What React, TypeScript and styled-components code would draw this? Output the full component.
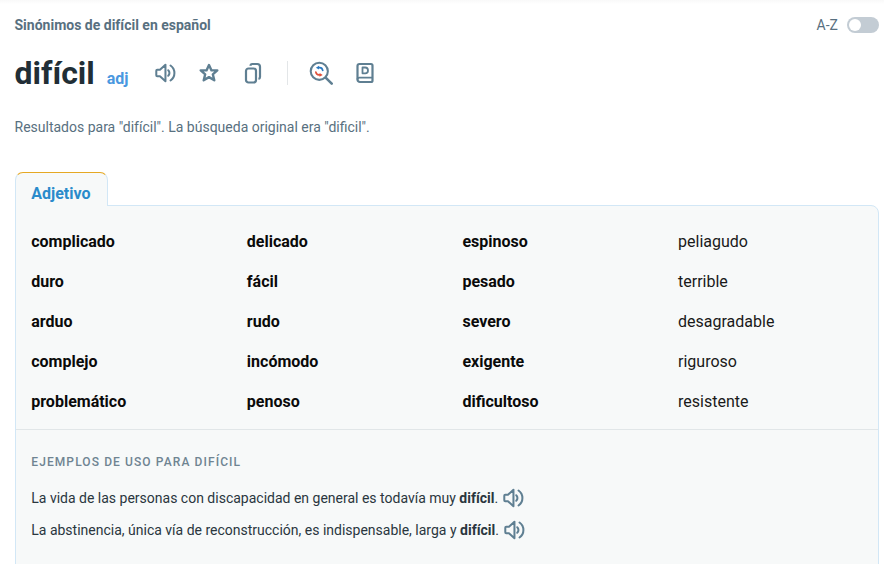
import styled, { createGlobalStyle } from 'styled-components';

const GlobalStyle = createGlobalStyle`
  html, body {
    margin: 0;
    height: 564px;
    overflow: hidden;
    background: #fff;
    font-family: Roboto, "Liberation Sans", sans-serif;
  }
`;

const Page = styled.div`
  height: 564px;
  overflow: hidden;
  padding: 0 5px 0 15px;
  background: linear-gradient(#f9f9f9, #fff 4px);
`;

const TopRow = styled.div`
  display: flex;
  justify-content: space-between;
  align-items: center;
  height: 20px;
  padding-top: 15px;
`;

const Heading = styled.h2`
  margin: 0 0 0 -0.5px;
  font-size: 14px;
  line-height: 20px;
  font-weight: 700;
  color: #587080;
`;

const SortToggle = styled.div`
  display: flex;
  align-items: center;
  gap: 9px;
  font-size: 14px;
  color: #587080;
`;

const Track = styled.div`
  width: 32px;
  height: 16px;
  border-radius: 8px;
  background: #c3ccd4;
  position: relative;

  &::after {
    content: '';
    position: absolute;
    left: 2px;
    top: 2px;
    width: 12px;
    height: 12px;
    border-radius: 50%;
    background: #fff;
  }
`;

const TitleRow = styled.div`
  display: flex;
  align-items: center;
  height: 40px;
  margin: 18px 0 0 -0.5px;
`;

const Word = styled.h1`
  margin: 0;
  font-size: 32px;
  line-height: 40px;
  font-weight: 700;
  color: #212e36;
`;

const Pos = styled.span`
  margin: 11px 0 0 12px;
  font-size: 16px;
  font-weight: 700;
  color: #4a98e0;
`;

const IconButton = styled.span<{ $left: number }>`
  display: flex;
  width: 24px;
  height: 24px;
  align-items: center;
  justify-content: center;
  margin-left: ${p => p.$left}px;
`;

const Divider = styled.span`
  width: 1px;
  height: 24px;
  background: #e3e6e8;
  margin-left: 22px;
`;

const Note = styled.p`
  margin: 24px 0 0 -0.5px;
  font-size: 14px;
  line-height: 20px;
  color: #587080;
`;

const Tab = styled.div`
  box-sizing: border-box;
  width: 93px;
  height: 34px;
  margin: 35px 0 -1px;
  position: relative;
  z-index: 1;
  padding: 12px 0 0 15.250px;
  border: 1px solid #d2e7f6;
  border-top: 1px solid #e5a823;
  border-bottom: none;
  border-radius: 8px 8px 0 0;
  background: #f7f9f9;
  font-size: 16px;
  line-height: 18px;
  font-weight: 700;
  color: #2a8bcb;
`;

const Panel = styled.div`
  box-sizing: border-box;
  height: 400px;
  border: 1px solid #d2e7f6;
  border-radius: 0 8px 0 0;
  background: #f7f9f9;
`;

const SynonymGrid = styled.div`
  display: grid;
  grid-template-columns: repeat(4, 215.6px);
  grid-auto-rows: 40px;
  padding: 16px 15px 7px 15.250px;
  border-bottom: 1px solid #e1e6e8;
`;

const Synonym = styled.span<{ $strong: boolean }>`
  font-size: 16px;
  line-height: 40px;
  font-weight: ${p => (p.$strong ? 700 : 400)};
  color: ${p => (p.$strong ? '#0a0a0a' : '#1a1a1a')};
`;

const Examples = styled.div`
  padding: 24px 15px 0 15.250px;
`;

const ExamplesTitle = styled.div`
  font-size: 12px;
  line-height: 16px;
  font-weight: 500;
  letter-spacing: 1.1px;
  color: #6f8492;
  margin-bottom: 12px;
`;

const Example = styled.div`
  display: flex;
  align-items: center;
  height: 32px;
  font-size: 14px;
  color: #2a363e;

  b {
    font-weight: 700;
    margin-left: 0.25em;
  }
`;

function SpeakerIcon({ size = 22 }: { size?: number }) {
  return (
    <svg width={size} height={size} viewBox="0 0 24 24" fill="none" stroke="#5f7f92" strokeWidth="2.200" strokeLinecap="round" strokeLinejoin="round">
      <path d="M2.500 9.500c0-.6.400-1 1-1h3L12.500 3v18l-6-5.500h-3c-.6 0-1-.4-1-1z" />
      <path d="M15.500 9a4 4 0 0 1 0 6" />
      <path d="M18 3.800a10 10 0 0 1 0 16.400" />
    </svg>
  );
}

function StarIcon() {
  return (
    <svg width="24" height="24" viewBox="0 0 24 24" fill="none" stroke="#5f7f92" strokeWidth="2.400" strokeLinejoin="round">
      <path d="M12 4l2.500 5.400h5.800l-4.500 3.900 1.500 6-5.300-3.200-5.300 3.200 1.500-6-4.500-3.900h5.800z" />
    </svg>
  );
}

function CopyIcon() {
  return (
    <svg width="24" height="24" viewBox="0 0 24 24" fill="none" stroke="#5f7f92" strokeWidth="2.200" strokeLinejoin="round">
      <rect x="5" y="7.500" width="10" height="14" rx="2.500" />
      <path d="M9.500 4.800c0-1 .8-1.800 1.800-1.800h5c1.500 0 2.700 1.200 2.700 2.700V16c0 1-.6 1.800-1.500 2" />
    </svg>
  );
}

function ReverseSearchIcon() {
  return (
    <svg width="28" height="28" viewBox="0 0 28 28" fill="none" strokeLinecap="round">
      <circle cx="12" cy="12" r="10" stroke="#5f7f92" strokeWidth="2.400" />
      <path d="M20 20l6.500 6.500" stroke="#5f7f92" strokeWidth="3" />
      <path d="M16 11c-.4-2-2-3.500-4.300-3.200" stroke="#2a78c0" strokeWidth="2" />
      <path d="M8 7.800l3.800-2.300-.2 4.500z" fill="#2a78c0" />
      <path d="M8 13c.4 2 2 3.500 4.300 3.200" stroke="#e0503a" strokeWidth="2" />
      <path d="M16 16.200l-3.800 2.300.2-4.500z" fill="#e0503a" />
    </svg>
  );
}

function BookIcon() {
  return (
    <svg width="24" height="24" viewBox="0 0 24 24" fill="none" stroke="#5f7f92" strokeWidth="2.200" strokeLinejoin="round">
      <path d="M6.500 3h11.500c.9 0 1.500.6 1.500 1.500v15c0 .9-.6 1.500-1.500 1.500H7c-1.500 0-2.500-1-2.500-2.500V5c0-1.200.8-2 2-2z" />
      <path d="M4.500 18.500c0-1 .8-1.800 2-1.800h13" strokeWidth="1.800" />
      <path d="M9.500 6.500h2.700c1.500 0 2.800 1.100 2.800 2.900s-1.300 2.900-2.800 2.900H9.500z" strokeWidth="1.800" />
    </svg>
  );
}

const rows = [
  ['complicado', 'delicado', 'espinoso', 'peliagudo'],
  ['duro', 'fácil', 'pesado', 'terrible'],
  ['arduo', 'rudo', 'severo', 'desagradable'],
  ['complejo', 'incómodo', 'exigente', 'riguroso'],
  ['problemático', 'penoso', 'dificultoso', 'resistente'],
];

const examples = [
  'La vida de las personas con discapacidad en general es todavía muy',
  'La abstinencia, única vía de reconstrucción, es indispensable, larga y',
];

export default function App() {
  return (
    <>
      <GlobalStyle />
      <Page>
        <TopRow>
          <Heading>Sinónimos de difícil en español</Heading>
          <SortToggle>
            A-Z
            <Track />
          </SortToggle>
        </TopRow>
        <TitleRow>
          <Word>difícil</Word>
          <Pos>adj</Pos>
          <IconButton $left={24}><SpeakerIcon /></IconButton>
          <IconButton $left={20}><StarIcon /></IconButton>
          <IconButton $left={20}><CopyIcon /></IconButton>
          <Divider />
          <IconButton $left={21}><ReverseSearchIcon /></IconButton>
          <IconButton $left={20}><BookIcon /></IconButton>
        </TitleRow>
        <Note>Resultados para "difícil". La búsqueda original era "dificil".</Note>
        <Tab>Adjetivo</Tab>
        <Panel>
          <SynonymGrid>
            {rows.flat().map((word, i) => (
              <Synonym key={word} $strong={i % 4 !== 3}>{word}</Synonym>
            ))}
          </SynonymGrid>
          <Examples>
            <ExamplesTitle>EJEMPLOS DE USO PARA DIFÍCIL</ExamplesTitle>
            {examples.map(text => (
              <Example key={text}>
                {text}<b>difícil</b>.
                <IconButton $left={3}><SpeakerIcon /></IconButton>
              </Example>
            ))}
          </Examples>
        </Panel>
      </Page>
    </>
  );
}
